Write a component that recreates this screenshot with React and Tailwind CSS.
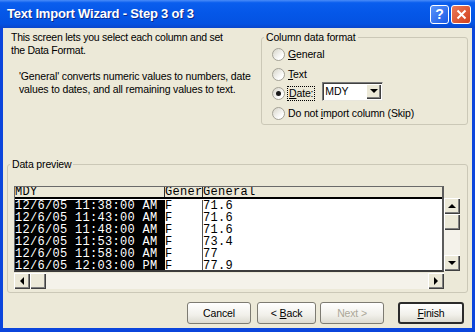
import React from 'react'

const bevel = 'bg-[#ece9d8] shadow-[inset_1px_1px_0_#ffffff,inset_-1px_-1px_0_#404040,inset_-2px_-2px_0_#808080]'

function Tri({ dir }) {
  const pts = {
    up: '0,4 4,0 8,4',
    down: '0,0 8,0 4,4',
    left: '4,0 4,8 0,4',
    right: '0,0 0,8 4,4',
  }[dir]
  const vert = dir === 'up' || dir === 'down'
  return (
    <svg width={vert ? 8 : 4} height={vert ? 4 : 8} viewBox={vert ? '0 0 8 4' : '0 0 4 8'}>
      <polygon points={pts} fill="#000" />
    </svg>
  )
}

function ScrollBtn({ dir }) {
  return (
    <div className={`w-[16px] h-[16px] shrink-0 flex items-center justify-center ${bevel}`}>
      {dir && <Tri dir={dir} />}
    </div>
  )
}

function Radio({ checked }) {
  return (
    <span className="w-[13px] h-[13px] rounded-full border border-[#a3a196] bg-[linear-gradient(135deg,#d6d4c8,#ffffff_75%)] flex items-center justify-center shrink-0">
      {checked && <span className="w-[5px] h-[5px] rounded-full bg-[#1a1a1a]" />}
    </span>
  )
}

function Button({ children, className = '', disabled, isDefault }) {
  return (
    <div
      className={`h-[22px] flex items-center justify-center rounded-[3px] bg-[linear-gradient(to_bottom,#ffffff,#f1f0ea_60%,#dcdad0)] ${
        isDefault ? 'border-2 border-[#2b2b2b]' : 'border border-[#7d7b72]'
      } ${disabled ? 'text-[#aca899]' : 'text-black'} ${className}`}
    >
      {children}
    </div>
  )
}

const rows = [
  ['12/6/05 11:38:00 AM', 'F', '71.6'],
  ['12/6/05 11:43:00 AM', 'F', '71.6'],
  ['12/6/05 11:48:00 AM', 'F', '71.6'],
  ['12/6/05 11:53:00 AM', 'F', '73.4'],
  ['12/6/05 11:58:00 AM', 'F', '77'],
  ['12/6/05 12:03:00 PM', 'F', '77.9'],
]

export default function App() {
  const mono = "font-['Liberation_Mono','Courier_New',monospace] text-[12px] tracking-[0.3px]"
  return (
    <div className="w-[475px] h-[332px] flex flex-col bg-[#0b45dc] overflow-hidden font-['Liberation_Sans',Arial,sans-serif]">
      {/* Title bar */}
      <div className="h-[28px] shrink-0 flex items-center pl-[7px] pr-[4px] bg-[linear-gradient(to_bottom,#4a8cf8_0%,#0a5eee_10%,#0557e8_45%,#0452e2_85%,#0a46cc_100%)]">
        <span className="text-white font-bold text-[13px] tracking-[-0.2px] [text-shadow:1px_1px_0_#0b2a8a]">
          Text Import Wizard - Step 3 of 3
        </span>
        <div className="ml-auto flex gap-[2px]">
          <div className="w-[19px] h-[19px] rounded-[3px] border border-white bg-[linear-gradient(135deg,#5a94fa,#1a5ae6)] flex items-center justify-center text-white font-bold text-[14px] leading-none">
            ?
          </div>
          <div className="w-[20px] h-[19px] rounded-[3px] border border-white bg-[linear-gradient(135deg,#eb7a5a,#d2401c)] flex items-center justify-center">
            <svg width="11" height="11" viewBox="0 0 11 11">
              <path d="M1.5 1.5 L9.5 9.5 M9.5 1.5 L1.5 9.5" stroke="#fff" strokeWidth="2" />
            </svg>
          </div>
        </div>
      </div>

      {/* Body */}
      <div className="mx-[3px] h-[300px] px-[4px] bg-[#ece9d8] flex flex-col text-[10.5px] tracking-[-0.15px] leading-[13px] text-black">
        <div className="h-[130px] shrink-0 flex">
          <div className="pl-[4px] pt-[3px] whitespace-nowrap">
            <p className="tracking-[-0.25px]">
              This screen lets you select each column and set
              <br />
              the Data Format.
            </p>
            <p className="mt-[13px] pl-[8px]">
              'General' converts numeric values to numbers, date
              <br />
              values to dates, and all remaining values to text.
            </p>
          </div>

          <fieldset className="ml-auto mt-[3px] w-[207px] h-[94px] border border-[#cbc8b7] rounded-[3px]">
            <legend className="ml-[2px] px-[2px]">Column data format</legend>
            <div className="flex flex-col pl-[10px]">
              <div className="h-[20px] flex items-center gap-[3px]">
                <Radio />
                <span>
                  <u>G</u>eneral
                </span>
              </div>
              <div className="h-[20px] flex items-center gap-[3px]">
                <Radio />
                <span>
                  <u>T</u>ext
                </span>
              </div>
              <div className="h-[19px] flex items-center gap-[1px]">
                <Radio checked />
                <span className="border border-dotted border-black px-[1px] ml-[1px] leading-[13px]">
                  <u>D</u>ate:
                </span>
                <div className="ml-[6px] mb-[5px] w-[61px] h-[19px] bg-white border border-[#7a7a7a] border-r-[#e8e6dc] border-b-[#e8e6dc] shadow-[inset_1px_1px_0_#404040] flex items-center">
                  <span className="pl-[2px] flex-1">MDY</span>
                  <div className="w-[15px] h-[15px] mr-[1px] flex items-center justify-center bg-[#ece9d8] shadow-[inset_1px_1px_0_#ffffff,inset_-1px_-1px_0_#404040,inset_-2px_-2px_0_#808080]">
                    <Tri dir="down" />
                  </div>
                </div>
              </div>
              <div className="h-[20px] flex items-center gap-[3px]">
                <Radio />
                <span>
                  Do not <u>i</u>mport column (Skip)
                </span>
              </div>
            </div>
          </fieldset>
        </div>

        {/* Data preview */}
        <fieldset className="h-[135px] shrink-0 border border-[#cbc8b7] rounded-[3px]">
          <legend className="ml-[2px] px-[2px]">Data preview</legend>
          <div className="ml-[6px] mt-[15px] w-[446px]">
            <div className="flex items-start">
              <div className="w-[430px] h-[86px] flex flex-col bg-white border-t border-l border-[#6a6a6a] border-r-2 border-r-[#5c5c5c] border-b-2 border-b-[#3c3c3c] overflow-hidden">
                <div className={`h-[12px] shrink-0 flex bg-[#ece9d8] border-b-2 border-black leading-[10px] ${mono}`}>
                  <div className="w-[150px] border-r border-[#303030] whitespace-nowrap">MDY</div>
                  <div className="w-[38px] border-r border-[#303030] overflow-hidden whitespace-nowrap">Gener</div>
                  <div className="flex-1 whitespace-nowrap">General</div>
                </div>
                <div className={`flex-1 pt-[1px] leading-[12px] ${mono}`}>
                  {rows.map((r, i) => (
                    <div key={i} className="h-[12px] flex whitespace-nowrap">
                      <div className="w-[150px] bg-black text-white">{r[0]}</div>
                      <div className="w-[38px] border-r border-[#555]">{r[1]}</div>
                      <div className="flex-1">{r[2]}</div>
                    </div>
                  ))}
                </div>
              </div>
              <div className="mt-[12px] w-[16px] h-[73px] flex flex-col bg-[#f4f2ea]">
                <ScrollBtn dir="up" />
                <ScrollBtn />
                <div className="flex-1" />
                <ScrollBtn dir="down" />
              </div>
            </div>
            <div className="mt-[1px] w-[430px] h-[16px] flex bg-[#f4f2ea]">
              <ScrollBtn dir="left" />
              <ScrollBtn />
              <div className="flex-1" />
              <ScrollBtn dir="right" />
            </div>
          </div>
        </fieldset>

        {/* Buttons */}
        <div className="mt-[9px] flex">
          <Button className="ml-[180px] w-[64px]">Cancel</Button>
          <Button className="ml-[6px] w-[59px]">
            &lt; <u className="ml-[3px]">B</u>ack
          </Button>
          <Button className="ml-[4px] w-[64px]" disabled>
            Next &gt;
          </Button>
          <Button className="ml-[14px] w-[66px]" isDefault>
            <u>F</u>inish
          </Button>
        </div>
      </div>
    </div>
  )
}
